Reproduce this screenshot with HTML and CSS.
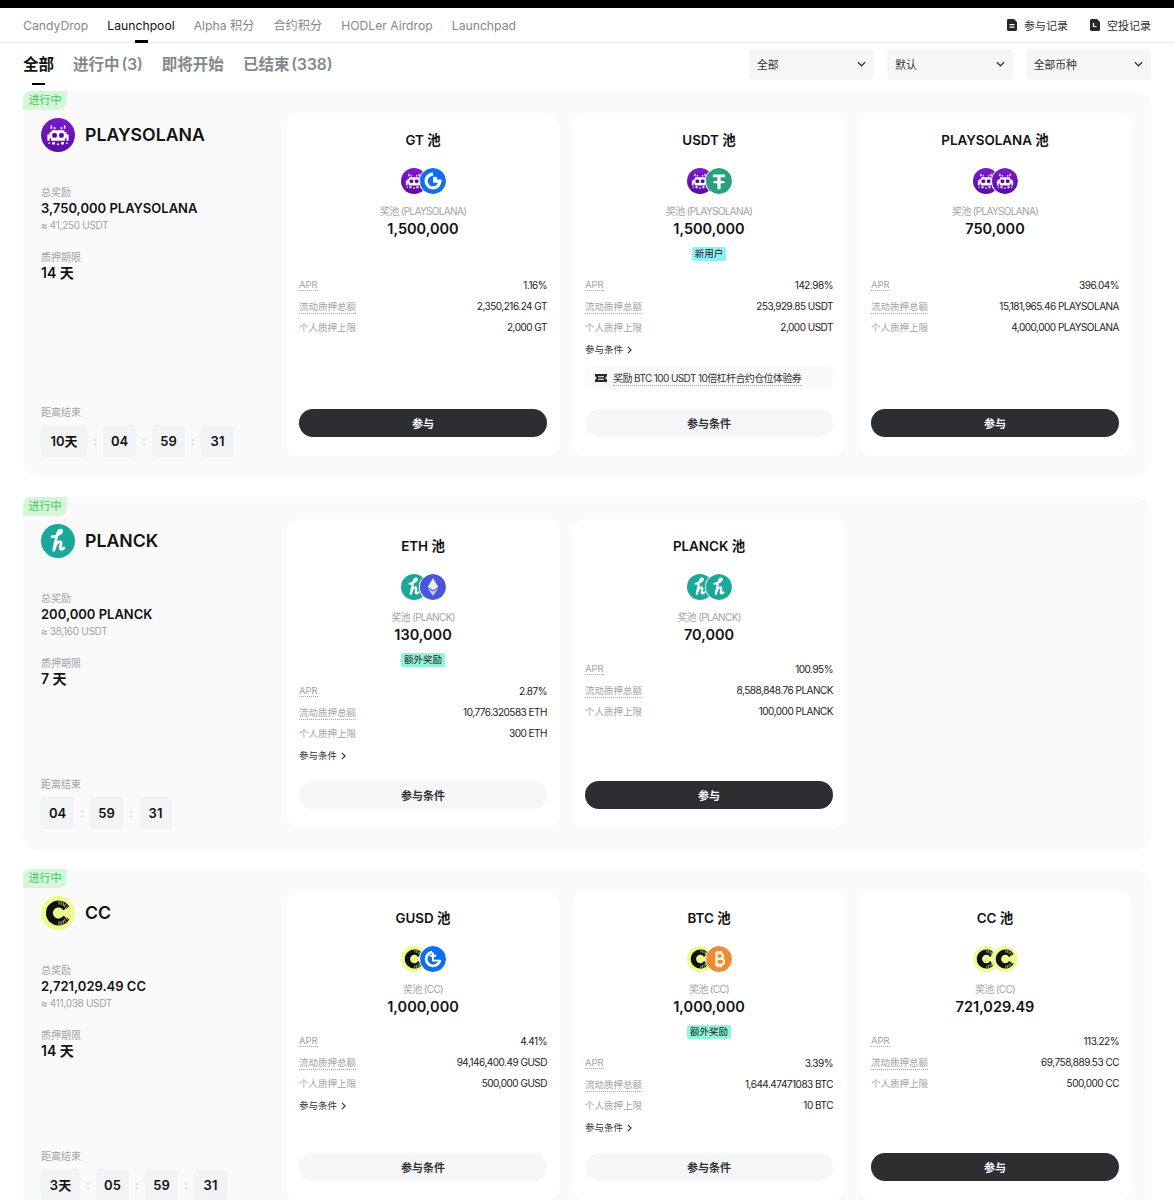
FILE: index.html
```html
<!DOCTYPE html>
<html lang="zh-CN">
<head>
    <meta charset="UTF-8">
    <meta name="viewport" content="width=device-width, initial-scale=1.0">
    <title>Launchpool</title>
    <link rel="stylesheet" href="styles.css">
</head>
<body>
    <svg class="icon-defs" width="0" height="0">
        <defs>
            <linearGradient id="purple" x1="0" y1="0" x2="0" y2="1">
                <stop offset="0" stop-color="#7c1bcc"/>
                <stop offset="1" stop-color="#5c0aa6"/>
            </linearGradient>
        </defs>
        <symbol id="coin-play" viewBox="0 0 32 32">
            <circle cx="16" cy="16" r="16" fill="url(#purple)"/>
            <path fill="#fff" d="M10 11.500h12V13.500h2v2h2v6h-2v-2.500h-1.500V21.500H9.500V19H8v2.500H6v-6h2v-2h2z"/>
            <path fill="#fff" d="M9 7h1.500v3H9zM21.500 7H23v3h-1.500zM12 8.500h1.500v2H12zM18.500 8.500H20v2h-1.500zM10.500 22.500H13V25h-2.500zM19 22.500h2.500V25H19zM15 24h2v1.500h-2zM7 23h1.500v1.500H7zM23.500 23H25v1.500h-1.500z"/>
            <rect x="10.500" y="14" width="4.500" height="4.500" rx="1.500" fill="#5c0aa6"/>
            <rect x="17" y="14" width="4.500" height="4.500" rx="1.500" fill="#5c0aa6"/>
        </symbol>
        <symbol id="coin-planck" viewBox="0 0 32 32">
            <circle cx="16" cy="16" r="16" fill="#19a89a"/>
            <path fill="none" stroke="#fff" stroke-width="2.600" stroke-linecap="round" stroke-linejoin="round" d="M10.500 12c3.500-1 8-1.800 9-5 .4-1.600-2-1.800-3-.3-1.800 3-3 10-4.500 18 1.200-4 3-8.200 5.500-8.200 2.700 0 .6 4.200.6 6.200 0 1.600 2 1.500 3.400-.2"/>
        </symbol>
        <symbol id="coin-cc" viewBox="0 0 32 32">
            <circle cx="16" cy="16" r="16" fill="#eefb8d"/>
            <path fill="none" stroke="#111" stroke-width="6.500" d="M23.800 11.800a8.500 8.500 0 1 0 0 8.400"/>
            <path fill="none" stroke="#eefb8d" stroke-width=".7" d="M17 4.500v3.500M19 5v3.500M21 6v3.500M23 7.500l-1 3M25 9.500l-2 2.500M17 27.500V24M19 27v-3.500M21 26v-3.500M23 24.500l-1-3M25 22.500l-2-2.500"/>
        </symbol>
        <symbol id="coin-gt" viewBox="0 0 32 32">
            <circle cx="16" cy="16" r="16" fill="#0b6ff2"/>
            <path fill="none" stroke="#fff" stroke-width="4" d="M16 7.500a8.500 8.500 0 1 0 8.500 8.500H16"/>
            <rect x="16" y="11" width="5" height="5" fill="#fff"/>
        </symbol>
        <symbol id="coin-gusd" viewBox="0 0 32 32">
            <circle cx="16" cy="16" r="16" fill="#0b6ff2"/>
            <path fill="none" stroke="#fff" stroke-width="3.400" d="M15 7.500a8.500 8.500 0 1 0 9.500 9.500"/>
            <path fill="none" stroke="#fff" stroke-width="2.400" d="M16 8v10h8M12 12h8"/>
        </symbol>
        <symbol id="coin-usdt" viewBox="0 0 32 32">
            <circle cx="16" cy="16" r="16" fill="#26a17b"/>
            <path fill="#fff" d="M8.500 8h15v3.500h-5.500v4.300c3.100.2 5.400.9 5.400 1.600s-2.300 1.400-5.400 1.600V26h-4v-7c-3.100-.2-5.400-.9-5.400-1.600s2.300-1.400 5.400-1.600v-4.300H8.500z"/>
        </symbol>
        <symbol id="coin-eth" viewBox="0 0 32 32">
            <circle cx="16" cy="16" r="16" fill="#4a55d8"/>
            <path fill="#fff" opacity=".9" d="M16 5l-6.500 11L16 20l6.500-4z"/>
            <path fill="#c5caf5" d="M16 21.500L9.500 17.500 16 27l6.500-9.500z"/>
        </symbol>
        <symbol id="coin-btc" viewBox="0 0 32 32">
            <circle cx="16" cy="16" r="16" fill="#f08b35"/>
            <path fill="none" stroke="#fff" stroke-width="2.500" d="M11 9h6.500a3.400 3.400 0 0 1 0 6.800H12.500h6a3.600 3.600 0 0 1 0 7.200H11M13 9v14M14.500 6v3M18 6v3M14.500 23v3M18 23v3"/>
        </symbol>
        <symbol id="icon-doc" viewBox="0 0 12 12">
            <path fill="#26272b" d="M2 0h6l3 3v7.500A1.500 1.500 0 0 1 9.500 12h-7A1.500 1.500 0 0 1 1 10.500v-9A1.500 1.500 0 0 1 2 0z"/>
            <path fill="#fff" d="M3.500 5h5v1.200h-5zM3.500 7.500h5v1.200h-5z"/>
        </symbol>
        <symbol id="icon-drop" viewBox="0 0 12 12">
            <path fill="#26272b" d="M2 0h6l3 3v7.500A1.500 1.500 0 0 1 9.500 12h-7A1.500 1.500 0 0 1 1 10.500v-9A1.500 1.500 0 0 1 2 0z"/>
            <path fill="none" stroke="#fff" stroke-width="1.200" d="M4.500 4v3.500h3"/>
        </symbol>
        <symbol id="icon-ticket" viewBox="0 0 12 10">
            <path fill="#26272b" d="M0 1h12v2.600a1.400 1.400 0 0 0 0 2.800V9H0V6.400a1.400 1.400 0 0 0 0-2.800z"/>
            <path fill="#fff" d="M3 3.300h6v1H3zM3 5.700h6v1H3z"/>
        </symbol>
        <symbol id="icon-down" viewBox="0 0 10 6">
            <path fill="none" stroke="#303236" stroke-width="1.400" d="M1 1l4 4 4-4"/>
        </symbol>
        <symbol id="icon-right" viewBox="0 0 6 10">
            <path fill="none" stroke="#303236" stroke-width="1.400" d="M1 1l4 4-4 4"/>
        </symbol>
    </svg>

    <div class="top-strip"></div>

    <nav class="main-nav">
        <div class="nav-links">
            <a class="nav-link">CandyDrop</a>
            <a class="nav-link active">Launchpool</a>
            <a class="nav-link">Alpha 积分</a>
            <a class="nav-link">合约积分</a>
            <a class="nav-link">HODLer Airdrop</a>
            <a class="nav-link">Launchpad</a>
        </div>
        <div class="nav-records">
            <a class="record-link"><svg class="record-icon"><use href="#icon-doc"/></svg>参与记录</a>
            <a class="record-link"><svg class="record-icon"><use href="#icon-drop"/></svg>空投记录</a>
        </div>
    </nav>

    <div class="filter-bar">
        <div class="tabs">
            <a class="tab active">全部</a>
            <a class="tab">进行中 (3)</a>
            <a class="tab">即将开始</a>
            <a class="tab">已结束 (338)</a>
        </div>
        <div class="selects">
            <div class="select">全部<svg class="select-arrow"><use href="#icon-down"/></svg></div>
            <div class="select">默认<svg class="select-arrow"><use href="#icon-down"/></svg></div>
            <div class="select">全部币种<svg class="select-arrow"><use href="#icon-down"/></svg></div>
        </div>
    </div>

    <section class="project project-first">
        <span class="status">进行中</span>
        <div class="summary">
            <div class="summary-title">
                <svg class="logo"><use href="#coin-play"/></svg>
                <h2>PLAYSOLANA</h2>
            </div>
            <div class="summary-label summary-total">总奖励</div>
            <div class="summary-value">3,750,000 PLAYSOLANA</div>
            <div class="summary-note">≈ 41,250 USDT</div>
            <div class="summary-label summary-term">质押期限</div>
            <div class="summary-value summary-days">14 天</div>
            <div class="countdown">
                <div class="summary-label">距离结束</div>
                <div class="timer">
                    <span class="time-box days-wide">10天</span><span class="time-sep">:</span>
                    <span class="time-box">04</span><span class="time-sep">:</span>
                    <span class="time-box">59</span><span class="time-sep">:</span>
                    <span class="time-box">31</span>
                </div>
            </div>
        </div>
        <div class="pools pools-even">
            <article class="pool">
                <div class="pool-head">
                    <h3>GT 池</h3>
                    <div class="coins"><svg class="coin"><use href="#coin-play"/></svg><svg class="coin coin-top"><use href="#coin-gt"/></svg></div>
                    <div class="pool-label">奖池 (PLAYSOLANA)</div>
                    <div class="pool-amount">1,500,000</div>
                </div>
                <div class="row"><span class="row-name dotted">APR</span><span class="row-value">1.16%</span></div>
                <div class="row"><span class="row-name dotted">流动质押总额</span><span class="row-value">2,350,216.24 GT</span></div>
                <div class="row"><span class="row-name">个人质押上限</span><span class="row-value">2,000 GT</span></div>
                <button class="btn btn-dark">参与</button>
            </article>
            <article class="pool">
                <div class="pool-head">
                    <h3>USDT 池</h3>
                    <div class="coins"><svg class="coin"><use href="#coin-play"/></svg><svg class="coin coin-top"><use href="#coin-usdt"/></svg></div>
                    <div class="pool-label">奖池 (PLAYSOLANA)</div>
                    <div class="pool-amount">1,500,000</div>
                    <span class="badge badge-new">新用户</span>
                </div>
                <div class="row"><span class="row-name dotted">APR</span><span class="row-value">142.98%</span></div>
                <div class="row"><span class="row-name dotted">流动质押总额</span><span class="row-value">253,929.85 USDT</span></div>
                <div class="row"><span class="row-name">个人质押上限</span><span class="row-value">2,000 USDT</span></div>
                <div class="terms">参与条件<svg class="terms-arrow"><use href="#icon-right"/></svg></div>
                <div class="voucher"><svg class="voucher-icon"><use href="#icon-ticket"/></svg><span class="dotted">奖励 BTC 100 USDT 10倍杠杆合约仓位体验券</span></div>
                <button class="btn">参与条件</button>
            </article>
            <article class="pool">
                <div class="pool-head">
                    <h3>PLAYSOLANA 池</h3>
                    <div class="coins"><svg class="coin"><use href="#coin-play"/></svg><svg class="coin coin-top"><use href="#coin-play"/></svg></div>
                    <div class="pool-label">奖池 (PLAYSOLANA)</div>
                    <div class="pool-amount">750,000</div>
                </div>
                <div class="row"><span class="row-name dotted">APR</span><span class="row-value">396.04%</span></div>
                <div class="row"><span class="row-name dotted">流动质押总额</span><span class="row-value">15,181,965.46 PLAYSOLANA</span></div>
                <div class="row"><span class="row-name">个人质押上限</span><span class="row-value">4,000,000 PLAYSOLANA</span></div>
                <button class="btn btn-dark">参与</button>
            </article>
        </div>
    </section>

    <section class="project project-second">
        <span class="status">进行中</span>
        <div class="summary">
            <div class="summary-title">
                <svg class="logo"><use href="#coin-planck"/></svg>
                <h2>PLANCK</h2>
            </div>
            <div class="summary-label summary-total">总奖励</div>
            <div class="summary-value">200,000 PLANCK</div>
            <div class="summary-note">≈ 38,160 USDT</div>
            <div class="summary-label summary-term">质押期限</div>
            <div class="summary-value summary-days">7 天</div>
            <div class="countdown">
                <div class="summary-label">距离结束</div>
                <div class="timer">
                    <span class="time-box">04</span><span class="time-sep">:</span>
                    <span class="time-box">59</span><span class="time-sep">:</span>
                    <span class="time-box">31</span>
                </div>
            </div>
        </div>
        <div class="pools">
            <article class="pool">
                <div class="pool-head">
                    <h3>ETH 池</h3>
                    <div class="coins"><svg class="coin"><use href="#coin-planck"/></svg><svg class="coin coin-top"><use href="#coin-eth"/></svg></div>
                    <div class="pool-label">奖池 (PLANCK)</div>
                    <div class="pool-amount">130,000</div>
                    <span class="badge badge-extra">额外奖励</span>
                </div>
                <div class="row"><span class="row-name dotted">APR</span><span class="row-value">2.87%</span></div>
                <div class="row"><span class="row-name dotted">流动质押总额</span><span class="row-value">10,776.320583 ETH</span></div>
                <div class="row"><span class="row-name">个人质押上限</span><span class="row-value">300 ETH</span></div>
                <div class="terms">参与条件<svg class="terms-arrow"><use href="#icon-right"/></svg></div>
                <button class="btn">参与条件</button>
            </article>
            <article class="pool">
                <div class="pool-head">
                    <h3>PLANCK 池</h3>
                    <div class="coins"><svg class="coin"><use href="#coin-planck"/></svg><svg class="coin coin-top"><use href="#coin-planck"/></svg></div>
                    <div class="pool-label">奖池 (PLANCK)</div>
                    <div class="pool-amount">70,000</div>
                </div>
                <div class="row"><span class="row-name dotted">APR</span><span class="row-value">100.95%</span></div>
                <div class="row"><span class="row-name dotted">流动质押总额</span><span class="row-value">8,588,848.76 PLANCK</span></div>
                <div class="row"><span class="row-name">个人质押上限</span><span class="row-value">100,000 PLANCK</span></div>
                <button class="btn btn-dark">参与</button>
            </article>
        </div>
    </section>

    <section class="project">
        <span class="status">进行中</span>
        <div class="summary">
            <div class="summary-title">
                <svg class="logo"><use href="#coin-cc"/></svg>
                <h2>CC</h2>
            </div>
            <div class="summary-label summary-total">总奖励</div>
            <div class="summary-value">2,721,029.49 CC</div>
            <div class="summary-note">≈ 411,038 USDT</div>
            <div class="summary-label summary-term">质押期限</div>
            <div class="summary-value summary-days">14 天</div>
            <div class="countdown">
                <div class="summary-label">距离结束</div>
                <div class="timer">
                    <span class="time-box days-narrow">3天</span><span class="time-sep">:</span>
                    <span class="time-box">05</span><span class="time-sep">:</span>
                    <span class="time-box">59</span><span class="time-sep">:</span>
                    <span class="time-box">31</span>
                </div>
            </div>
        </div>
        <div class="pools">
            <article class="pool">
                <div class="pool-head">
                    <h3>GUSD 池</h3>
                    <div class="coins"><svg class="coin"><use href="#coin-cc"/></svg><svg class="coin coin-top"><use href="#coin-gusd"/></svg></div>
                    <div class="pool-label">奖池 (CC)</div>
                    <div class="pool-amount">1,000,000</div>
                </div>
                <div class="row"><span class="row-name dotted">APR</span><span class="row-value">4.41%</span></div>
                <div class="row"><span class="row-name dotted">流动质押总额</span><span class="row-value">94,146,400.49 GUSD</span></div>
                <div class="row"><span class="row-name">个人质押上限</span><span class="row-value">500,000 GUSD</span></div>
                <div class="terms">参与条件<svg class="terms-arrow"><use href="#icon-right"/></svg></div>
                <button class="btn">参与条件</button>
            </article>
            <article class="pool">
                <div class="pool-head">
                    <h3>BTC 池</h3>
                    <div class="coins"><svg class="coin"><use href="#coin-cc"/></svg><svg class="coin coin-top"><use href="#coin-btc"/></svg></div>
                    <div class="pool-label">奖池 (CC)</div>
                    <div class="pool-amount">1,000,000</div>
                    <span class="badge badge-extra">额外奖励</span>
                </div>
                <div class="row"><span class="row-name dotted">APR</span><span class="row-value">3.39%</span></div>
                <div class="row"><span class="row-name dotted">流动质押总额</span><span class="row-value">1,644.47471083 BTC</span></div>
                <div class="row"><span class="row-name">个人质押上限</span><span class="row-value">10 BTC</span></div>
                <div class="terms">参与条件<svg class="terms-arrow"><use href="#icon-right"/></svg></div>
                <button class="btn">参与条件</button>
            </article>
            <article class="pool">
                <div class="pool-head">
                    <h3>CC 池</h3>
                    <div class="coins"><svg class="coin"><use href="#coin-cc"/></svg><svg class="coin coin-top"><use href="#coin-cc"/></svg></div>
                    <div class="pool-label">奖池 (CC)</div>
                    <div class="pool-amount">721,029.49</div>
                </div>
                <div class="row"><span class="row-name dotted">APR</span><span class="row-value">113.22%</span></div>
                <div class="row"><span class="row-name dotted">流动质押总额</span><span class="row-value">69,758,889.53 CC</span></div>
                <div class="row"><span class="row-name">个人质押上限</span><span class="row-value">500,000 CC</span></div>
                <button class="btn btn-dark">参与</button>
            </article>
        </div>
    </section>
</body>
</html>
```

FILE: styles.css
```css
* {
    margin: 0;
    padding: 0;
    box-sizing: border-box;
}

html, body {
    height: 1200px;
    overflow: hidden;
}

body {
    background: white;
    color: #111214;
    font-family: Inter, 'Noto Sans CJK SC', sans-serif;
}

.icon-defs {
    position: absolute;
}

.top-strip {
    height: 8px;
    background: #000;
}

/* top navigation */
.main-nav {
    display: flex;
    justify-content: space-between;
    align-items: center;
    height: 35px;
    padding: 0 23px;
    border-bottom: 1px solid #eceded;
}

.nav-links {
    display: flex;
    gap: 19px;
}

.nav-link {
    position: relative;
    padding-top: 2px;
    font-size: 12.2px;
    line-height: 32px;
    color: #84888c;
}

.nav-link.active {
    color: #111214;
}

.nav-link.active::after {
    content: '';
    position: absolute;
    left: 50%;
    bottom: -1px;
    width: 13px;
    height: 3px;
    margin-left: -6px;
    background: #000;
}

.nav-records {
    display: flex;
    gap: 21px;
}

.record-link {
    display: flex;
    align-items: center;
    gap: 6px;
    font-size: 11px;
    color: #303236;
}

.record-icon {
    width: 12px;
    height: 12px;
}

/* tabs and selects */
.filter-bar {
    display: flex;
    justify-content: space-between;
    align-items: center;
    height: 48px;
    padding: 0 23px 5px;
}

.tabs {
    display: flex;
    gap: 19px;
}

.tab {
    position: relative;
    padding-top: 1px;
    font-size: 15.5px;
    font-weight: 600;
    line-height: 40px;
    word-spacing: -2px;
    color: #84888c;
}

.tab.active {
    color: #111214;
}

.tab.active::after {
    content: '';
    position: absolute;
    left: 9px;
    bottom: 0;
    width: 13px;
    height: 2px;
    background: #000;
}

.selects {
    display: flex;
    gap: 13px;
    width: 402px;
}

.select {
    display: flex;
    flex: 1;
    justify-content: space-between;
    align-items: center;
    height: 31px;
    padding: 0 8px 1px;
    background: #f5f6f7;
    border-radius: 4px;
    font-size: 10.8px;
    color: #303236;
}

.select-arrow {
    width: 9px;
    height: 6px;
}

/* project block */
.project {
    position: relative;
    display: flex;
    margin: 0 23px 18px;
    padding: 22px 19px 20px 18px;
    background: #fafafb;
    border-radius: 16px;
}

.project-first {
    margin-bottom: 21px;
}

.project-second {
    padding-bottom: 23px;
}

.status {
    position: absolute;
    top: 0;
    left: 0;
    width: 44px;
    height: 19px;
    background: #d5f6d9;
    border-radius: 8px 0 8px 0;
    font-size: 11px;
    line-height: 19px;
    text-align: center;
    color: #4cc464;
}

.summary {
    display: flex;
    flex-direction: column;
    flex: 0 0 245px;
    padding-top: 5px;
}

.summary-title {
    display: flex;
    align-items: center;
    gap: 10px;
    height: 34px;
}

.summary-title h2 {
    font-size: 17.7px;
    font-weight: 600;
    margin-top: -2px;
}

.logo {
    width: 34px;
    height: 34px;
}

.summary-label {
    font-size: 10px;
    line-height: 14px;
    color: #a0a3a7;
}

.summary-total {
    margin-top: 33px;
}

.summary-term {
    margin-top: 18px;
}

.summary-value {
    font-size: 13px;
    font-weight: 600;
    line-height: 18px;
}

.summary-days {
    font-size: 14px;
}

.summary-note {
    margin-top: 1px;
    font-size: 10px;
    line-height: 14px;
    letter-spacing: -0.3px;
    color: #a0a3a7;
}

.countdown {
    margin-top: auto;
    margin-bottom: -1px;
}

.timer {
    display: flex;
    margin-top: 6px;
}

.time-box {
    width: 33px;
    height: 32px;
    background: #f2f3f4;
    border-radius: 4px;
    font-size: 13px;
    font-weight: 600;
    line-height: 32px;
    text-align: center;
}

.days-wide {
    width: 46px;
}

.days-narrow {
    width: 39px;
}

.time-sep {
    width: 16px;
    font-size: 11px;
    line-height: 32px;
    text-align: center;
    color: #b9bcc0;
}

/* pool cards */
.pools {
    display: flex;
    gap: 12px;
    flex: 1;
}

.pool {
    display: flex;
    flex-direction: column;
    width: 274px;
    padding: 17px 13px 19px;
    background: white;
    border-radius: 14px;
}

.pool-head {
    display: flex;
    flex-direction: column;
    align-items: center;
    margin-bottom: 13.5px;
}

.pools-even .pool-head {
    min-height: 131px;
}

.pool-head h3 {
    font-size: 13.4px;
    font-weight: 600;
    line-height: 20px;
}

.coins {
    display: flex;
    margin-top: 18px;
    height: 26px;
}

.coin {
    width: 26px;
    height: 26px;
}

.coin-top {
    margin-left: -7px;
    border-radius: 50%;
    box-shadow: 0 0 0 1px white;
}

.pool-label {
    margin-top: 10px;
    font-size: 10px;
    line-height: 14px;
    letter-spacing: -0.65px;
    color: #a0a3a7;
}

.pool-amount {
    margin-top: 1px;
    font-size: 14.5px;
    font-weight: 600;
    line-height: 20px;
}

.badge {
    margin-top: 8px;
    padding: 0 3px;
    border-radius: 2px;
    font-size: 9.5px;
    line-height: 14px;
    color: #1e2023;
}

.badge-new {
    background: #8ff0f5;
}

.badge-extra {
    background: #8ff5d8;
}

.row {
    display: flex;
    justify-content: space-between;
    align-items: center;
    height: 21px;
    font-size: 10px;
}

.row-name {
    font-size: 9.5px;
    color: #a0a3a7;
}

.row-value {
    letter-spacing: -0.5px;
    color: #1e2023;
}

.dotted {
    border-bottom: 1px dotted #a0a3a7;
}

.terms {
    display: flex;
    align-items: center;
    gap: 4px;
    margin-top: 5.5px;
    margin-bottom: 18px;
    font-size: 9.5px;
    line-height: 14px;
    color: #303236;
}

.terms:has(+ .voucher) {
    margin-bottom: 0;
}

.terms-arrow {
    width: 5px;
    height: 8px;
}

.voucher {
    display: flex;
    align-items: center;
    gap: 6px;
    height: 24px;
    margin-top: 9px;
    margin-bottom: 19px;
    padding: 0 10px;
    background: #fafafb;
    border-radius: 6px;
    font-size: 10px;
    letter-spacing: -0.6px;
    color: #303236;
}

.voucher-icon {
    width: 12px;
    height: 10px;
}

.btn {
    height: 28px;
    margin-top: auto;
    border: none;
    border-radius: 14px;
    background: #f5f6f7;
    font-family: inherit;
    font-size: 11px;
    font-weight: 600;
    color: #303236;
}

.btn-dark {
    background: #2d2e32;
    color: white;
}
```
